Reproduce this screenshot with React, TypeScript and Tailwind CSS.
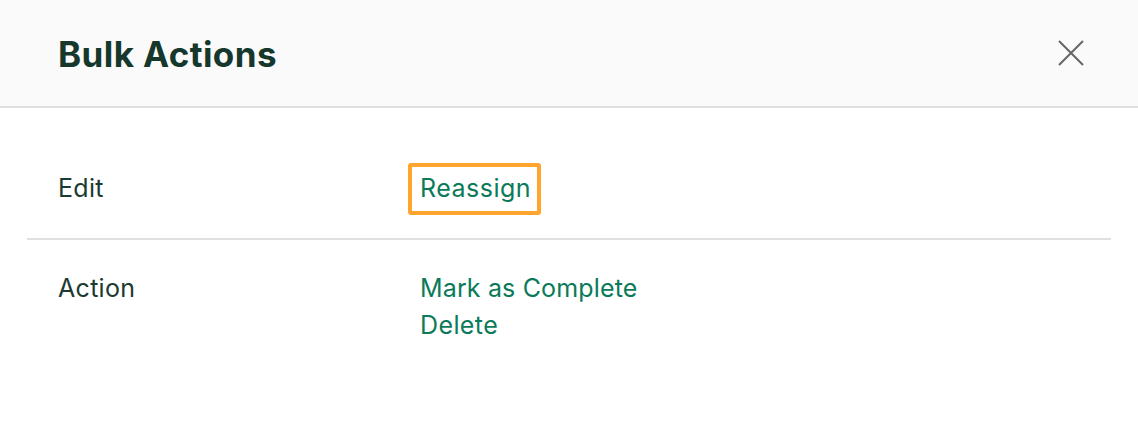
import React from 'react';

export default function App() {
  const font = { fontFamily: 'Inter, "Noto Sans", sans-serif' };

  return (
    <div className="w-[1138px] h-[430px] bg-white overflow-hidden" style={font}>
      <div className="h-[108px] bg-[#fafafa] border-b-2 border-[#e0e0e0] flex items-center justify-between pl-[58px] pr-[53px]">
        <h1 className="text-[35px] font-bold text-[#15372c] tracking-[0.4px] pt-[2px]">Bulk Actions</h1>
        <button className="w-[28px] h-[28px] flex items-center justify-center">
          <svg width="26" height="26" viewBox="0 0 26 26" fill="none" stroke="#666" strokeWidth="2">
            <path d="M1 1L25 25M25 1L1 25" />
          </svg>
        </button>
      </div>

      <div className="px-[27px]">
        <div className="flex items-center pt-[55px] pb-[23px] border-b-2 border-[#e0e0e0]">
          <div className="w-[381px] pl-[31px] text-[25px] tracking-[0.3px] text-[#1c3a2f]">Edit</div>
          <div className="h-[52px] border-4 border-[#ffa52e] rounded-[3px] pl-[8px] pr-[6px] flex items-center">
            <span className="text-[25px] tracking-[0.5px] text-[#0b7a59]">Reassign</span>
          </div>
        </div>

        <div className="flex pt-[30px]">
          <div className="w-[393px] pl-[31px] text-[25px] tracking-[0.3px] leading-[37px] text-[#1c3a2f]">Action</div>
          <div className="flex flex-col text-[25px] tracking-[0.15px] leading-[37px] text-[#0b7a59]">
            <span>Mark as Complete</span>
            <span className="tracking-[0.4px]">Delete</span>
          </div>
        </div>
      </div>
    </div>
  );
}
